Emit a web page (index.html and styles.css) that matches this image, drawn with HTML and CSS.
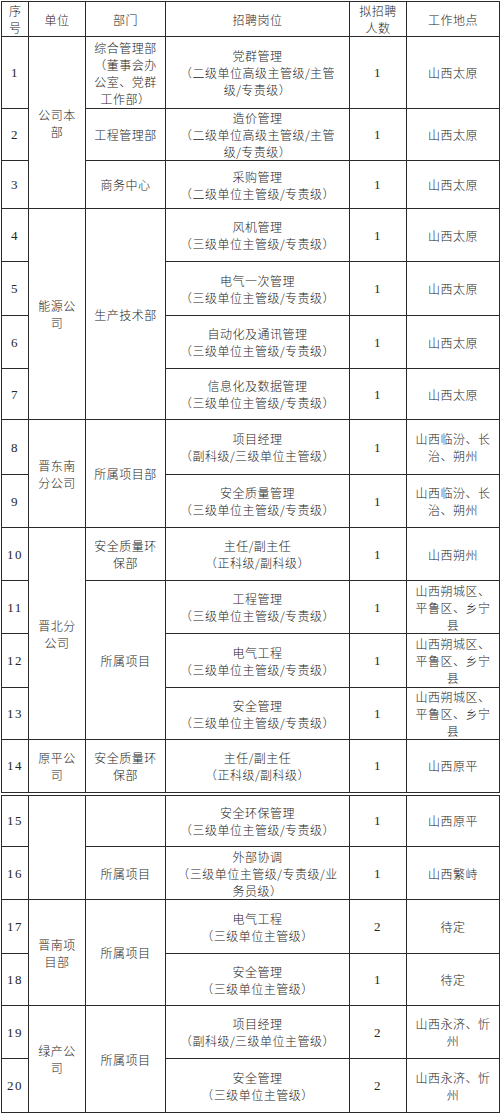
FILE: index.html
```html
<!DOCTYPE html>
<html lang="zh-CN">
<head>
<meta charset="utf-8">
<title>招聘岗位表</title>
<link rel="stylesheet" href="styles.css">
</head>
<body>
<div class="page">
<table class="jobs">
  <colgroup>
    <col class="c-no"><col class="c-unit"><col class="c-dept"><col class="c-pos"><col class="c-num"><col class="c-loc">
  </colgroup>
  <thead>
    <tr class="h-head">
      <th class="no">序<br>号</th><th>单位</th><th>部门</th><th>招聘岗位</th><th>拟招聘<br>人数</th><th>工作地点</th>
    </tr>
  </thead>
  <tbody>
    <tr class="h72">
      <td class="no">1</td>
      <td rowspan="3">公司本<br>部</td>
      <td>综合管理部<br>（董事会办<br>公室、党群<br>工作部）</td>
      <td>党群管理<br>（二级单位高级主管级/主管<br>级/专责级）</td>
      <td class="num">1</td><td>山西太原</td>
    </tr>
    <tr class="h52">
      <td class="no">2</td>
      <td>工程管理部</td>
      <td>造价管理<br>（二级单位高级主管级/主管<br>级/专责级）</td>
      <td class="num">1</td><td>山西太原</td>
    </tr>
    <tr class="h48">
      <td class="no">3</td>
      <td>商务中心</td>
      <td>采购管理<br>（二级单位主管级/专责级）</td>
      <td class="num">1</td><td>山西太原</td>
    </tr>
    <tr class="h53">
      <td class="no">4</td>
      <td rowspan="4">能源公<br>司</td>
      <td rowspan="4">生产技术部</td>
      <td>风机管理<br>（三级单位主管级/专责级）</td>
      <td class="num">1</td><td>山西太原</td>
    </tr>
    <tr class="h54">
      <td class="no">5</td>
      <td>电气一次管理<br>（三级单位主管级/专责级）</td>
      <td class="num">1</td><td>山西太原</td>
    </tr>
    <tr class="h53">
      <td class="no">6</td>
      <td>自动化及通讯管理<br>（三级单位主管级/专责级）</td>
      <td class="num">1</td><td>山西太原</td>
    </tr>
    <tr class="h51">
      <td class="no">7</td>
      <td>信息化及数据管理<br>（三级单位主管级/专责级）</td>
      <td class="num">1</td><td>山西太原</td>
    </tr>
    <tr class="h55">
      <td class="no">8</td>
      <td rowspan="2">晋东南<br>分公司</td>
      <td rowspan="2">所属项目部</td>
      <td>项目经理<br>（副科级/三级单位主管级）</td>
      <td class="num">1</td><td>山西临汾、长<br>治、朔州</td>
    </tr>
    <tr class="h53">
      <td class="no">9</td>
      <td>安全质量管理<br>（三级单位主管级/专责级）</td>
      <td class="num">1</td><td>山西临汾、长<br>治、朔州</td>
    </tr>
    <tr class="h53">
      <td class="no">10</td>
      <td rowspan="4">晋北分<br>公司</td>
      <td>安全质量环<br>保部</td>
      <td>主任/副主任<br>（正科级/副科级）</td>
      <td class="num">1</td><td>山西朔州</td>
    </tr>
    <tr class="h53">
      <td class="no">11</td>
      <td rowspan="3">所属项目</td>
      <td>工程管理<br>（三级单位主管级/专责级）</td>
      <td class="num">1</td><td>山西朔城区、<br>平鲁区、乡宁<br>县</td>
    </tr>
    <tr class="h54">
      <td class="no">12</td>
      <td>电气工程<br>（三级单位主管级/专责级）</td>
      <td class="num">1</td><td>山西朔城区、<br>平鲁区、乡宁<br>县</td>
    </tr>
    <tr class="h52">
      <td class="no">13</td>
      <td>安全管理<br>（三级单位主管级/专责级）</td>
      <td class="num">1</td><td>山西朔城区、<br>平鲁区、乡宁<br>县</td>
    </tr>
    <tr class="h54">
      <td class="no">14</td>
      <td>原平公<br>司</td>
      <td>安全质量环<br>保部</td>
      <td>主任/副主任<br>（正科级/副科级）</td>
      <td class="num">1</td><td>山西原平</td>
    </tr>
    <tr class="h53 split">
      <td class="no">15</td>
      <td rowspan="2"></td>
      <td></td>
      <td>安全环保管理<br>（三级单位主管级/专责级）</td>
      <td class="num">1</td><td>山西原平</td>
    </tr>
    <tr class="h53">
      <td class="no">16</td>
      <td>所属项目</td>
      <td>外部协调<br>（三级单位主管级/专责级/业<br>务员级）</td>
      <td class="num">1</td><td>山西繁峙</td>
    </tr>
    <tr class="h54">
      <td class="no">17</td>
      <td rowspan="2">晋南项<br>目部</td>
      <td rowspan="2">所属项目</td>
      <td>电气工程<br>（三级单位主管级）</td>
      <td class="num">2</td><td>待定</td>
    </tr>
    <tr class="h52">
      <td class="no">18</td>
      <td>安全管理<br>（三级单位主管级）</td>
      <td class="num">1</td><td>待定</td>
    </tr>
    <tr class="h53">
      <td class="no">19</td>
      <td rowspan="2">绿产公<br>司</td>
      <td rowspan="2">所属项目</td>
      <td>项目经理<br>（副科级/三级单位主管级）</td>
      <td class="num">2</td><td>山西永济、忻<br>州</td>
    </tr>
    <tr class="h54">
      <td class="no">20</td>
      <td>安全管理<br>（三级单位主管级）</td>
      <td class="num">2</td><td>山西永济、忻<br>州</td>
    </tr>
  </tbody>
</table>
</div>
</body>
</html>
```

FILE: styles.css
```css
html, body {
  margin: 0;
  padding: 0;
  background: #ffffff;
}

.page {
  padding: 1px 0 0 1px;
}

.jobs {
  border-collapse: collapse;
  table-layout: fixed;
  width: 498px;
  font-family: "Noto Sans CJK SC", "Noto Sans CJK JP", sans-serif;
  font-weight: 300;
  font-size: 12px;
  line-height: 17px;
  letter-spacing: 0.5px;
  color: #262626;
}

.c-no { width: 27px; }
.c-unit { width: 57px; }
.c-dept { width: 80px; }
.c-pos { width: 184px; }
.c-num { width: 57px; }
.c-loc { width: 93px; }

.jobs th,
.jobs td {
  border: 1px solid #2b2b2b;
  padding: 0;
  text-align: center;
  vertical-align: middle;
  font-weight: 300;
  overflow: hidden;
}

.jobs .no,
.jobs .num {
  font-family: "Liberation Serif", "DejaVu Serif", serif;
  font-size: 13px;
  letter-spacing: 1.5px;
}

.jobs th.no {
  font-family: "Noto Sans CJK SC", sans-serif;
  font-size: 12px;
  letter-spacing: 0;
}

.h-head { height: 35px; }
.h48 { height: 48px; }
.h51 { height: 51px; }
.h52 { height: 52px; }
.h53 { height: 53px; }
.h54 { height: 54px; }
.h55 { height: 55px; }
.h72 { height: 72px; }

.split td {
  border-top: 4px double #2b2b2b;
}
```
